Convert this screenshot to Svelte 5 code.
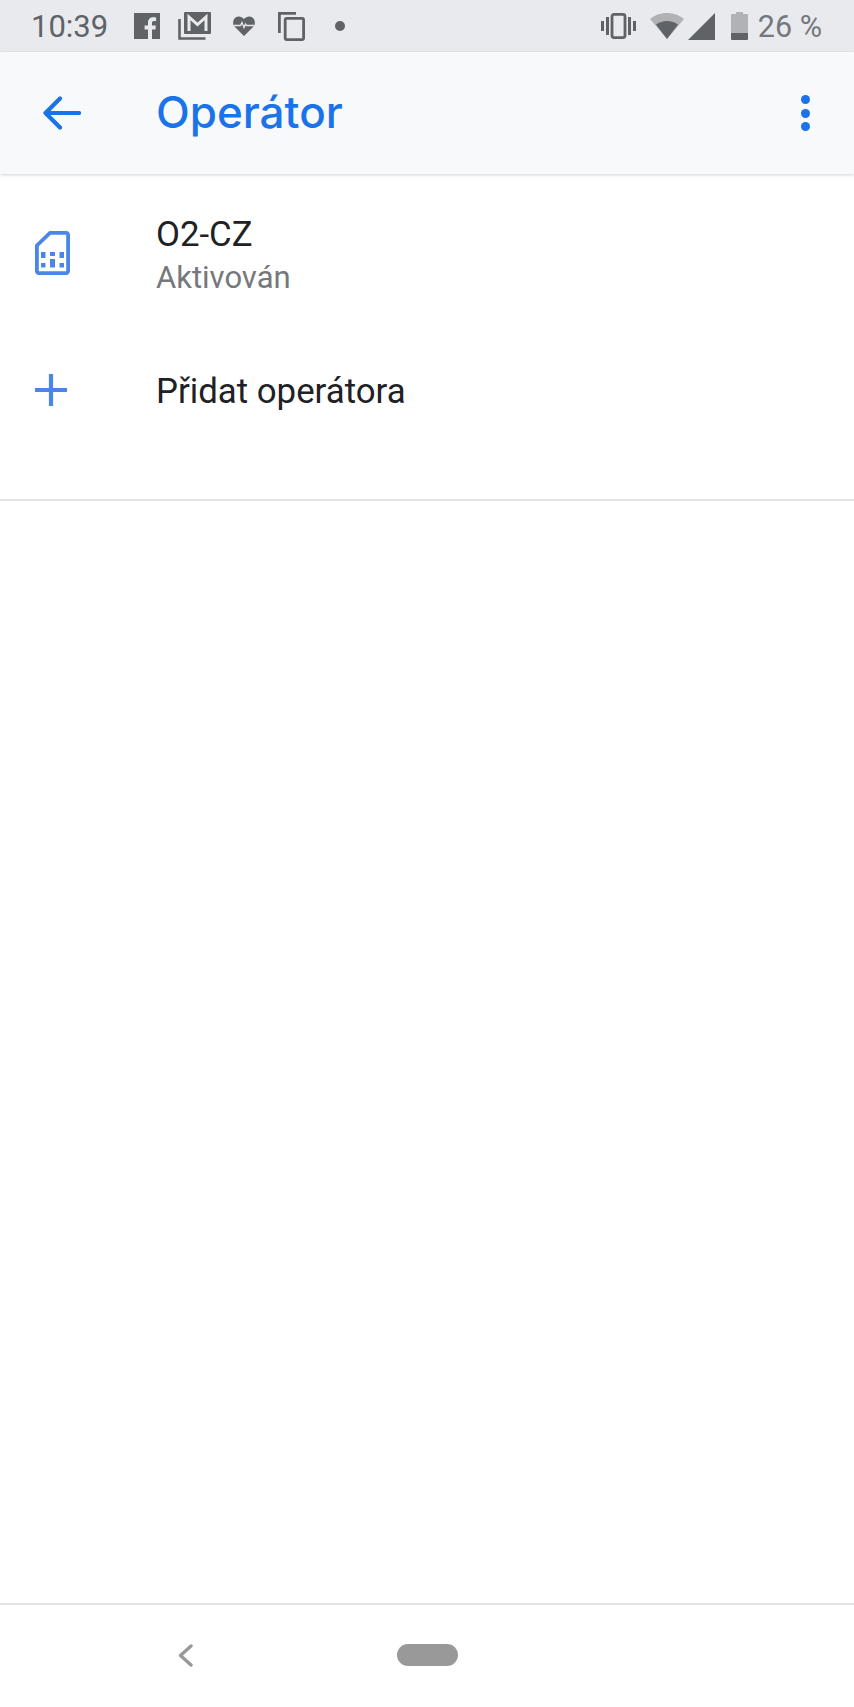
<script>
  const rows = [
    { id: "sim", title: "O2-CZ", sub: "Aktivován" },
    { id: "add", title: "Přidat operátora" }
  ];
</script>

<div class="screen">
  <div class="status">
    <span class="time">10:39</span>
    <svg class="s-fb" width="26" height="26" viewBox="0 0 26 26"><path fill="#5f6368" d="M0 0h26v26H18v-9.500h3.400l.5-4H18V10c0-1.200.4-2 2-2h2.100V4.400C21.700 4.300 20.500 4.200 19.200 4.200c-3 0-5.200 1.900-5.200 5.300v3H10.600v4H14V26H0z"/></svg>
    <svg class="s-mail" width="33" height="28" viewBox="0 0 33 28"><path fill="none" stroke="#5f6368" stroke-width="2.600" d="M1.500 7v19.500h26"/><rect x="6" y="0" width="27" height="22" rx="1" fill="#5f6368"/><path fill="none" stroke="#e8eaed" stroke-width="3" d="M11 19V5l8.500 7.500L28 5v14"/></svg>
    <svg class="s-heart" width="22" height="20" viewBox="0 0 22 20"><path fill="#5f6368" d="M11 20L1.500 10.500C-.5 8-.3 4 2 2c2.500-2.300 6.500-2 9 1 2.500-3 6.500-3.300 9-1 2.300 2 2.500 6 .5 8.500z"/><path fill="none" stroke="#e8eaed" stroke-width="1.300" d="M1 9.500h6.500l1.500-3 2 5 1.500-3.500 1 1.500h7.500"/></svg>
    <svg class="s-copy" width="27" height="29" viewBox="0 0 27 29"><g fill="none" stroke="#5f6368" stroke-width="2.800"><path d="M1.400 21V1.400H18"/><rect x="7.200" y="6.400" width="18.400" height="21.200" rx="1.500"/></g></svg>
    <span class="dot"></span>

    <span class="spacer"></span>

    <svg class="s-vib" width="35" height="26" viewBox="0 0 35 26"><g fill="#5f6368"><rect x="0" y="8" width="3" height="10"/><rect x="5" y="4" width="3" height="18"/><rect x="27" y="4" width="3" height="18"/><rect x="32" y="8" width="3" height="10"/></g><rect x="11" y="1.400" width="13" height="23.200" rx="2" fill="none" stroke="#5f6368" stroke-width="2.800"/></svg>
    <svg class="s-wifi" width="34" height="26" viewBox="0 0 34 26"><path fill="#b0b2b5" d="M0 6C4.500 2.200 10.500 0 17 0s12.500 2.200 17 6L17 26z"/><path fill="#5f6368" d="M6 11.500c3-2.200 7-3.500 11-3.500s8 1.300 11 3.500L17 26z"/></svg>
    <svg class="s-signal" width="27" height="27" viewBox="0 0 27 27"><path fill="#5f6368" d="M27 0v27H0z"/></svg>
    <svg class="s-batt" width="17" height="28" viewBox="0 0 17 28"><path fill="#b0b2b5" d="M5 0h7v2h4a1 1 0 0 1 1 1v19H0V3a1 1 0 0 1 1-1h4z"/><path fill="#5f6368" d="M0 21h17v6a1 1 0 0 1-1 1H1a1 1 0 0 1-1-1z"/></svg>
    <span class="pct">26 %</span>
  </div>

  <header class="bar">
    <span class="lead">
      <svg width="38" height="34" viewBox="0 0 38 34"><path fill="none" stroke="#1a73e8" stroke-width="4.200" stroke-linecap="round" stroke-linejoin="round" d="M36 17H3M17 2.500L2.500 17 17 31.500"/></svg>
    </span>
    <h1>Operátor</h1>
    <span class="more" aria-label="Více">
      <i></i><i></i><i></i>
    </span>
  </header>

  <ul class="list">
    {#each rows as r (r.id)}
      <li class="row" class:first={r.sub}>
        <span class="icon">
          {#if r.id === "sim"}
            <svg width="35" height="44" viewBox="0 0 35 44"><path fill="none" stroke="#4a86e8" stroke-width="3.800" stroke-linejoin="round" d="M15 1.900h16.500a2 2 0 0 1 1.600 1.600v37a2 2 0 0 1-1.600 1.600h-28a2 2 0 0 1-1.600-1.600V14.500z"/><path fill="#4a86e8" d="M6 21h4.500v6H6zM15 21h5v4h-5zM29 21h-4.500v6H29zM6 32h4.500v4.500H6zM15 28h5v8.500h-5zM24.500 32H29v4.500h-4.500z"/></svg>
          {:else}
            <svg width="32" height="32" viewBox="0 0 32 32"><path fill="none" stroke="#4a86e8" stroke-width="4.200" d="M16 0v32M0 16h32"/></svg>
          {/if}
        </span>
        <div class="text">
          <div class="title">{r.title}</div>
          {#if r.sub}<div class="sub">{r.sub}</div>{/if}
        </div>
      </li>
    {/each}
  </ul>

  <div class="fill"></div>

  <nav class="nav">
    <svg class="chev" width="15" height="23" viewBox="0 0 15 23"><path fill="none" stroke="#999" stroke-width="3.400" stroke-linecap="round" stroke-linejoin="round" d="M13 2L2.500 11.500 13 21"/></svg>
    <span class="pill"></span>
  </nav>
</div>

<style>
  :global(body) { margin: 0; background: #fff; }
  .screen { width: 854px; height: 1707px; display: flex; flex-direction: column; font-family: Roboto, "Liberation Sans", sans-serif; overflow: hidden; }

  .status { height: 52px; flex: none; background: #e8eaed; display: flex; align-items: center; padding: 0 32px 0 31px; box-sizing: border-box; }
  .status svg { flex: none; display: block; }
  .time { font-size: 31px; color: #5f6368; width: 103px; flex: none; }
  .s-mail { margin-left: 18px; }
  .s-heart { margin-left: 22px; }
  .s-copy { margin-left: 23px; }
  .dot { width: 10px; height: 10px; border-radius: 50%; background: #5f6368; margin-left: 30px; flex: none; }
  .spacer { flex: 1; }
  .s-wifi { margin-left: 14px; }
  .s-signal { margin-left: 4px; }
  .s-batt { margin-left: 16px; }
  .pct { font-size: 30.500px; color: #75787c; margin-left: 10px; }

  .bar { height: 122px; flex: none; background: #f8f9fb; display: flex; align-items: center; box-shadow: 0 1px 3px rgba(0, 0, 0, 0.18); position: relative; }
  .lead { width: 156px; flex: none; padding-left: 43px; box-sizing: border-box; }
  .lead svg { display: block; }
  h1 { margin: 0 0 3px; font-family: Inter, sans-serif; font-weight: 500; font-size: 44px; color: #1a73e8; flex: 1; }
  .more { width: 9px; margin-right: 44px; display: flex; flex-direction: column; gap: 4.500px; }
  .more i { width: 9px; height: 9px; border-radius: 50%; background: #1a73e8; display: block; }

  .list { list-style: none; margin: 0; padding: 0 0 51px; border-bottom: 2px solid #e2e2e2; }
  .row { display: flex; align-items: center; height: 116px; }
  .row.first { height: 158px; }
  .row.first .text { padding-top: 6px; }
  .text { padding-top: 2px; }
  .icon { width: 156px; flex: none; padding-left: 35px; box-sizing: border-box; }
  .icon svg { display: block; }
  .title { font-size: 34.800px; color: #202124; line-height: 44px; }
  .sub { font-size: 31px; color: #75787c; line-height: 44px; }

  .fill { flex: 1; }

  .nav { height: 104px; flex: none; border-top: 2px solid #e2e2e2; box-sizing: border-box; display: flex; align-items: center; padding-left: 178px; }
  .chev { display: block; margin-top: -2px; }
  .pill { width: 61px; height: 22px; border-radius: 11px; background: #999; margin-left: 204px; margin-top: -2px; }
</style>
